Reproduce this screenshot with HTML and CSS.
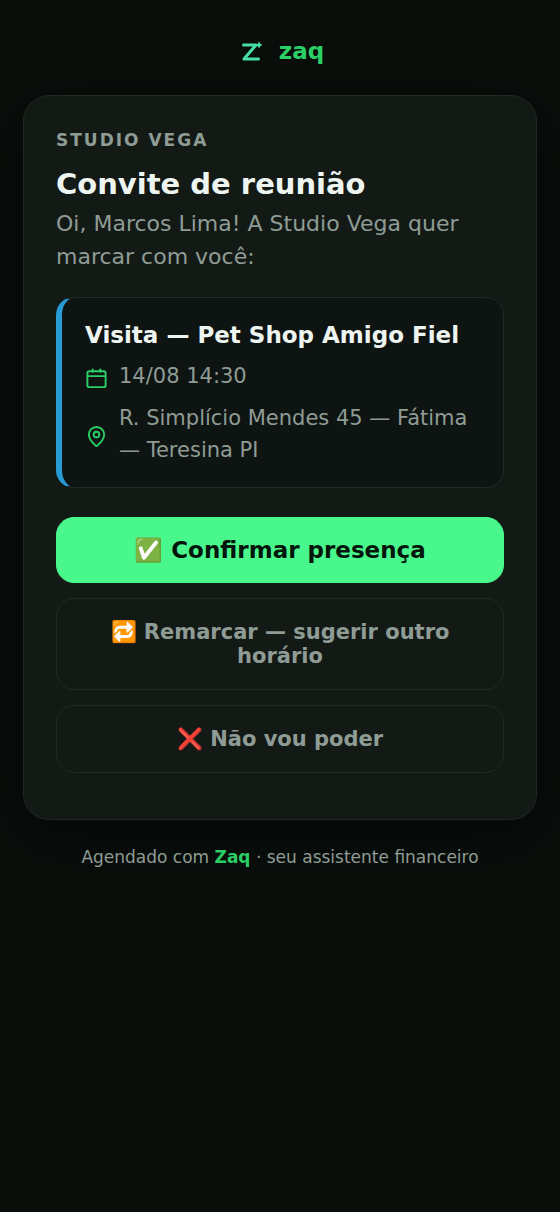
FILE: index.html
```html
<!DOCTYPE html>
<html lang="pt-BR">
<head>
<meta charset="utf-8">
<meta name="viewport" content="width=device-width, initial-scale=1">
<title>Convite de reunião</title>
<link rel="stylesheet" href="styles.css">
</head>
<body>
<main class="page">
  <header class="brand">
    <svg class="brand-mark" viewBox="0 0 28 28" aria-hidden="true">
      <path d="M7.500 7H20L8 21H22.500" fill="none" stroke="currentColor" stroke-width="3" stroke-linecap="round" stroke-linejoin="round"/>
      <path d="M23 3.500L24.200 5.800L26.500 7L24.200 8.200L23 10.500L21.800 8.200L19.500 7L21.800 5.800Z" fill="currentColor"/>
    </svg>
    <span class="brand-name">zaq</span>
  </header>
  <section class="card">
    <p class="company">STUDIO VEGA</p>
    <h1 class="heading">Convite de reunião</h1>
    <p class="intro">Oi, Marcos Lima! A Studio Vega quer marcar com você:</p>
    <article class="event">
      <h2 class="event-title">Visita — Pet Shop Amigo Fiel</h2>
      <div class="detail">
        <svg class="icon" viewBox="0 0 24 24" aria-hidden="true"><rect x="2.500" y="4.500" width="19" height="16.500" rx="2"/><path d="M3 9.500H21M8 2.500V5M16 2.500V5"/></svg>
        <span>14/08 14:30</span>
      </div>
      <div class="detail">
        <svg class="icon" viewBox="0 0 24 24" aria-hidden="true"><path d="M20 10c0 5-5.500 10.200-7.400 11.800a1 1 0 0 1-1.200 0C9.500 20.200 4 15 4 10a8 8 0 0 1 16 0Z"/><circle cx="12" cy="10" r="3"/></svg>
        <span>R. Simplício Mendes 45 — Fátima — Teresina PI</span>
      </div>
    </article>
    <div class="actions">
      <button class="button button-primary" type="button">✅ Confirmar presença</button>
      <button class="button" type="button">🔁 Remarcar — sugerir outro horário</button>
      <button class="button" type="button">❌ Não vou poder</button>
    </div>
  </section>
  <footer class="footer">Agendado com <strong class="footer-brand">Zaq</strong> · seu assistente financeiro</footer>
</main>
</body>
</html>
```
FILE: styles.css
```css
* {
  box-sizing: border-box;
}

body {
  margin: 0;
  min-height: 100vh;
  background: #090e0b;
  color: #8f9c95;
  font-family: "DejaVu Sans", sans-serif;
}

.page {
  max-width: 640px;
  margin: 0 auto;
  padding: 34px 23px;
}

.brand {
  display: flex;
  align-items: center;
  justify-content: center;
  gap: 15px;
  margin-bottom: 26px;
}

.brand-mark {
  width: 28px;
  height: 28px;
  color: #46dfa8;
}

.brand-name {
  color: #2bcf66;
  font-size: 23px;
  font-weight: 700;
  line-height: 35px;
}

.card {
  padding: 31px 32px 46px;
  border: 1px solid #202924;
  border-radius: 26px;
  background: #131a16;
  box-shadow: 0 16px 56px rgba(0, 0, 0, 0.5);
}

.company {
  margin: 0 0 13px;
  font-size: 17px;
  font-weight: 700;
  line-height: 26px;
  letter-spacing: 2px;
}

.heading {
  margin: 0 0 5px;
  color: #eef5f1;
  font-size: 29px;
  line-height: 36px;
}

.intro {
  margin: 0 0 24px;
  font-size: 22px;
  line-height: 33px;
}

.event {
  padding: 20px 22px 21px 23px;
  border: 1px solid #202924;
  border-left: 6px solid #279bd5;
  border-radius: 18px;
  background: #0e1412;
}

.event-title {
  margin: 0 0 8px;
  color: #eef5f1;
  font-size: 23px;
  line-height: 34px;
}

.detail {
  display: flex;
  align-items: center;
  gap: 11px;
  font-size: 21px;
  line-height: 32px;
}

.detail + .detail {
  margin-top: 10px;
}

.icon {
  flex: none;
  width: 23px;
  height: 23px;
  margin-top: 4px;
  fill: none;
  stroke: #2bcf66;
  stroke-width: 2;
  stroke-linecap: round;
  stroke-linejoin: round;
}

.actions {
  display: grid;
  gap: 15px;
  margin-top: 29px;
}

.button {
  width: 100%;
  padding: 21px 22px;
  border: 1px solid #202924;
  border-radius: 18px;
  background: transparent;
  color: #8f9c95;
  font-family: inherit;
  font-size: 21px;
  font-weight: 700;
  line-height: 24px;
  cursor: pointer;
}

.button-primary {
  padding: 20px 22px;
  border-color: #49f88c;
  background: #49f88c;
  color: #04160b;
  font-size: 23px;
}

.footer {
  margin-top: 24px;
  font-size: 17px;
  line-height: 26px;
  text-align: center;
}

.footer-brand {
  color: #2bcf66;
}
```
